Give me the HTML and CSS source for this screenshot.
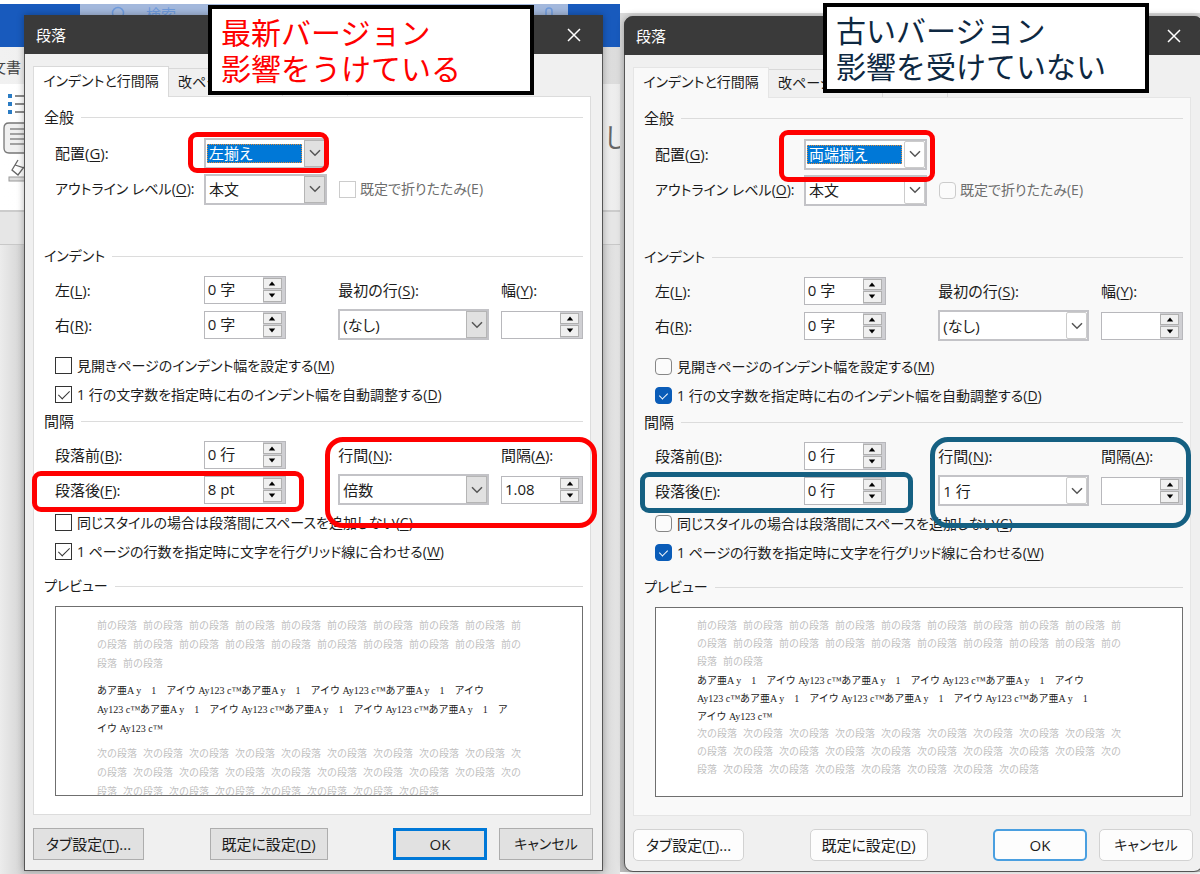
FILE: index.html
```html
<!DOCTYPE html>
<html lang="ja">
<head>
<meta charset="utf-8">
<meta name="viewport" content="width=device-width, initial-scale=1">
<title>段落</title>
<link rel="stylesheet" href="styles.css">
</head>
<body>
<svg class="defs" aria-hidden="true">
  <symbol id="chevron" viewBox="0 0 12 8"><path d="M1 1.2 6 6.2 11 1.2" fill="none" stroke="currentColor" stroke-width="1.5"/></symbol>
  <symbol id="up" viewBox="0 0 8 5"><path d="M4 0.4 7.2 4.4H0.8Z" fill="currentColor"/></symbol>
  <symbol id="down" viewBox="0 0 8 5"><path d="M4 4.6 7.2 0.6H0.8Z" fill="currentColor"/></symbol>
  <symbol id="cross" viewBox="0 0 14 14"><path d="M1 1 13 13M13 1 1 13" fill="none" stroke="currentColor" stroke-width="1.5"/></symbol>
</svg>
<main class="compare">

<section class="side side-new">
  <div class="word" aria-hidden="true">
    <div class="word-title"><div class="word-search">
      <svg class="lens" viewBox="0 0 16 16"><circle cx="8" cy="7" r="5.5" fill="none" stroke="#6f9bdc" stroke-width="1.5"/><path d="M4 11 0 15" stroke="#6f9bdc" stroke-width="1.5"/></svg>
      <span>検索</span>
      <svg class="mic" viewBox="0 0 10 14"><rect x="2" y="1" width="6" height="11" rx="3" fill="none" stroke="#6f9bdc" stroke-width="1.5"/></svg>
    </div></div>
    <div class="word-tabs"><span>文書</span></div>
    <div class="word-ribbon">
      <svg class="tools" viewBox="0 0 24 100">
        <g fill="#2b7cc4"><rect x="8" y="6" width="4" height="4"/><rect x="8" y="14" width="4" height="4"/><rect x="8" y="22" width="4" height="4"/></g>
        <path d="M15 8h9M15 16h9M15 24h9" stroke="#666" stroke-width="1.3"/>
        <path d="M24 35H9Q4 35 4 40V60Q4 65 9 65H24" fill="#f0f0f0" stroke="#777" stroke-width="1.3"/>
        <path d="M10 41h14M10 46h14M10 51h14M10 56h14" stroke="#555" stroke-width="1.2"/>
        <path d="M18 72 12 82 18 87 24 79M15 77 24 80" fill="none" stroke="#666" stroke-width="1.3"/>
        <rect x="9" y="89" width="18" height="4" fill="#ddd" stroke="#999"/>
      </svg>
      <span class="style-name">し</span>
    </div>
    <div class="word-ruler"></div>
    <div class="word-page"></div>
  </div>

  <form class="dialog" aria-label="段落 最新バージョン">
    <header class="titlebar"><h2>段落</h2><button type="button" class="close" aria-label="閉じる"><svg><use href="#cross"/></svg></button></header>
    <nav class="tabs"><button type="button" class="tab tab-on">インデントと行間隔</button><button type="button" class="tab tab-page">改ページと改行</button><button type="button" class="tab tab-style">体裁</button></nav>
    <div class="panel">
      <h3 class="group">全般</h3>
      <div class="general">
        <label for="a-align">配置(<u>G</u>):</label>
        <div class="combo combo-focus"><select id="a-align"><option>左揃え</option></select><span class="drop"><svg><use href="#chevron"/></svg></span></div>
        <span></span>
        <label class="kana" for="a-level">アウトライン レベル(<u>O</u>):</label>
        <div class="combo"><select id="a-level"><option>本文</option></select><span class="drop"><svg><use href="#chevron"/></svg></span></div>
        <label class="check check-off"><input type="checkbox" disabled>既定で折りたたみ(E)</label>
      </div>
      <h3 class="group group-indent kana">インデント</h3>
      <div class="fields">
        <label for="a-left">左(<u>L</u>):</label>
        <div class="spin"><input id="a-left" type="text" value="0 字"><span class="steps"><button type="button" aria-label="増やす"><svg><use href="#up"/></svg></button><button type="button" aria-label="減らす"><svg><use href="#down"/></svg></button></span></div>
        <label for="a-first">最初の行(<u>S</u>):</label>
        <label for="a-width">幅(<u>Y</u>):</label>
        <label for="a-right">右(<u>R</u>):</label>
        <div class="spin"><input id="a-right" type="text" value="0 字"><span class="steps"><button type="button" aria-label="増やす"><svg><use href="#up"/></svg></button><button type="button" aria-label="減らす"><svg><use href="#down"/></svg></button></span></div>
        <div class="combo combo-wide"><select id="a-first"><option>(なし)</option></select><span class="drop"><svg><use href="#chevron"/></svg></span></div>
        <div class="spin"><input id="a-width" type="text" value=""><span class="steps"><button type="button" aria-label="増やす"><svg><use href="#up"/></svg></button><button type="button" aria-label="減らす"><svg><use href="#down"/></svg></button></span></div>
      </div>
      <div class="checks checks-indent">
        <label class="check"><input type="checkbox"><span>見開きページのインデント幅を設定する(<u>M</u>)</span></label>
        <label class="check"><input type="checkbox" checked><span>1 行の文字数を指定時に右のインデント幅を自動調整する(<u>D</u>)</span></label>
      </div>
      <h3 class="group">間隔</h3>
      <div class="fields">
        <label for="a-before">段落前(<u>B</u>):</label>
        <div class="spin"><input id="a-before" type="text" value="0 行"><span class="steps"><button type="button" aria-label="増やす"><svg><use href="#up"/></svg></button><button type="button" aria-label="減らす"><svg><use href="#down"/></svg></button></span></div>
        <label for="a-line">行間(<u>N</u>):</label>
        <label for="a-at">間隔(<u>A</u>):</label>
        <label for="a-after">段落後(<u>F</u>):</label>
        <div class="spin"><input id="a-after" type="text" value="8 pt"><span class="steps"><button type="button" aria-label="増やす"><svg><use href="#up"/></svg></button><button type="button" aria-label="減らす"><svg><use href="#down"/></svg></button></span></div>
        <div class="combo combo-wide"><select id="a-line"><option>倍数</option></select><span class="drop"><svg><use href="#chevron"/></svg></span></div>
        <div class="spin"><input id="a-at" type="text" value="1.08"><span class="steps"><button type="button" aria-label="増やす"><svg><use href="#up"/></svg></button><button type="button" aria-label="減らす"><svg><use href="#down"/></svg></button></span></div>
      </div>
      <div class="checks">
        <label class="check"><input type="checkbox"><span>同じスタイルの場合は段落間にスペースを追加しない(<u>C</u>)</span></label>
        <label class="check"><input type="checkbox" checked><span>1 ページの行数を指定時に文字を行グリッド線に合わせる(<u>W</u>)</span></label>
      </div>
      <h3 class="group group-preview kana">プレビュー</h3>
      <div class="preview">
        <p>前の段落 前の段落 前の段落 前の段落 前の段落 前の段落 前の段落 前の段落 前の段落 前<br>の段落 前の段落 前の段落 前の段落 前の段落 前の段落 前の段落 前の段落 前の段落 前の<br>段落 前の段落</p>
        <p class="sample">あア亜A y　1　アイウ Ay123 c™あア亜A y　1　アイウ Ay123 c™あア亜A y　1　アイウ<br>Ay123 c™あア亜A y　1　アイウ Ay123 c™あア亜A y　1　アイウ Ay123 c™あア亜A y　1　ア<br>イウ Ay123 c™</p>
        <p>次の段落 次の段落 次の段落 次の段落 次の段落 次の段落 次の段落 次の段落 次の段落 次<br>の段落 次の段落 次の段落 次の段落 次の段落 次の段落 次の段落 次の段落 次の段落 次の<br>段落 次の段落 次の段落 次の段落 次の段落 次の段落 次の段落 次の段落</p>
      </div>
    </div>
    <footer class="actions">
      <button type="button" class="push push-tab">タブ設定(<u>T</u>)...</button>
      <button type="button" class="push push-default">既定に設定(<u>D</u>)</button>
      <div class="confirm"><button type="button" class="push push-ok">OK</button><button type="button" class="push kana">キャンセル</button></div>
    </footer>
    <div class="note note-new">最新バージョン<br>影響をうけている</div>
    <div class="mark mark-align"></div>
    <div class="mark mark-after"></div>
    <div class="mark mark-line"></div>
  </form>
</section>

<section class="side side-old">
  <div class="desk" aria-hidden="true"></div>
  <form class="dialog dialog-round" aria-label="段落 古いバージョン">
    <header class="titlebar"><h2>段落</h2><button type="button" class="close" aria-label="閉じる"><svg><use href="#cross"/></svg></button></header>
    <nav class="tabs"><button type="button" class="tab tab-on">インデントと行間隔</button><button type="button" class="tab tab-page">改ページと改行</button><button type="button" class="tab tab-style">体裁</button></nav>
    <div class="panel">
      <h3 class="group">全般</h3>
      <div class="general">
        <label for="b-align">配置(<u>G</u>):</label>
        <div class="combo combo-focus"><select id="b-align"><option>両端揃え</option></select><span class="drop"><svg><use href="#chevron"/></svg></span></div>
        <span></span>
        <label class="kana" for="b-level">アウトライン レベル(<u>O</u>):</label>
        <div class="combo"><select id="b-level"><option>本文</option></select><span class="drop"><svg><use href="#chevron"/></svg></span></div>
        <label class="check check-off"><input type="checkbox" disabled>既定で折りたたみ(E)</label>
      </div>
      <h3 class="group group-indent kana">インデント</h3>
      <div class="fields">
        <label for="b-left">左(<u>L</u>):</label>
        <div class="spin"><input id="b-left" type="text" value="0 字"><span class="steps"><button type="button" aria-label="増やす"><svg><use href="#up"/></svg></button><button type="button" aria-label="減らす"><svg><use href="#down"/></svg></button></span></div>
        <label for="b-first">最初の行(<u>S</u>):</label>
        <label for="b-width">幅(<u>Y</u>):</label>
        <label for="b-right">右(<u>R</u>):</label>
        <div class="spin"><input id="b-right" type="text" value="0 字"><span class="steps"><button type="button" aria-label="増やす"><svg><use href="#up"/></svg></button><button type="button" aria-label="減らす"><svg><use href="#down"/></svg></button></span></div>
        <div class="combo combo-wide"><select id="b-first"><option>(なし)</option></select><span class="drop"><svg><use href="#chevron"/></svg></span></div>
        <div class="spin"><input id="b-width" type="text" value=""><span class="steps"><button type="button" aria-label="増やす"><svg><use href="#up"/></svg></button><button type="button" aria-label="減らす"><svg><use href="#down"/></svg></button></span></div>
      </div>
      <div class="checks checks-indent">
        <label class="check"><input type="checkbox"><span>見開きページのインデント幅を設定する(<u>M</u>)</span></label>
        <label class="check"><input type="checkbox" checked><span>1 行の文字数を指定時に右のインデント幅を自動調整する(<u>D</u>)</span></label>
      </div>
      <h3 class="group">間隔</h3>
      <div class="fields">
        <label for="b-before">段落前(<u>B</u>):</label>
        <div class="spin"><input id="b-before" type="text" value="0 行"><span class="steps"><button type="button" aria-label="増やす"><svg><use href="#up"/></svg></button><button type="button" aria-label="減らす"><svg><use href="#down"/></svg></button></span></div>
        <label for="b-line">行間(<u>N</u>):</label>
        <label for="b-at">間隔(<u>A</u>):</label>
        <label for="b-after">段落後(<u>F</u>):</label>
        <div class="spin"><input id="b-after" type="text" value="0 行"><span class="steps"><button type="button" aria-label="増やす"><svg><use href="#up"/></svg></button><button type="button" aria-label="減らす"><svg><use href="#down"/></svg></button></span></div>
        <div class="combo combo-wide"><select id="b-line"><option>1 行</option></select><span class="drop"><svg><use href="#chevron"/></svg></span></div>
        <div class="spin"><input id="b-at" type="text" value=""><span class="steps"><button type="button" aria-label="増やす"><svg><use href="#up"/></svg></button><button type="button" aria-label="減らす"><svg><use href="#down"/></svg></button></span></div>
      </div>
      <div class="checks">
        <label class="check"><input type="checkbox"><span>同じスタイルの場合は段落間にスペースを追加しない(<u>C</u>)</span></label>
        <label class="check"><input type="checkbox" checked><span>1 ページの行数を指定時に文字を行グリッド線に合わせる(<u>W</u>)</span></label>
      </div>
      <h3 class="group group-preview kana">プレビュー</h3>
      <div class="preview preview-tight">
        <p>前の段落 前の段落 前の段落 前の段落 前の段落 前の段落 前の段落 前の段落 前の段落 前<br>の段落 前の段落 前の段落 前の段落 前の段落 前の段落 前の段落 前の段落 前の段落 前の<br>段落 前の段落</p>
        <p class="sample">あア亜A y　1　アイウ Ay123 c™あア亜A y　1　アイウ Ay123 c™あア亜A y　1　アイウ<br>Ay123 c™あア亜A y　1　アイウ Ay123 c™あア亜A y　1　アイウ Ay123 c™あア亜A y　1<br>アイウ Ay123 c™</p>
        <p>次の段落 次の段落 次の段落 次の段落 次の段落 次の段落 次の段落 次の段落 次の段落 次<br>の段落 次の段落 次の段落 次の段落 次の段落 次の段落 次の段落 次の段落 次の段落 次の<br>段落 次の段落 次の段落 次の段落 次の段落 次の段落 次の段落 次の段落</p>
      </div>
    </div>
    <footer class="actions">
      <button type="button" class="push push-tab">タブ設定(<u>T</u>)...</button>
      <button type="button" class="push push-default">既定に設定(<u>D</u>)</button>
      <div class="confirm"><button type="button" class="push push-ok">OK</button><button type="button" class="push kana">キャンセル</button></div>
    </footer>
    <div class="note note-old">古いバージョン<br>影響を受けていない</div>
    <div class="mark mark-align-old"></div>
    <div class="mark mark-blue mark-after-old"></div>
    <div class="mark mark-blue mark-line-old"></div>
  </form>
</section>

</main>
</body>
</html>
```
FILE: styles.css
```css
* { box-sizing: border-box; }

body {
  margin: 0;
  background: #fff;
  color: #1c1c1c;
  font: 15px/20px "Open Sans", "Noto Sans CJK JP", sans-serif;
  font-feature-settings: "palt";
}

h2, h3, p { margin: 0; font-size: inherit; font-weight: 400; }

button, input, select {
  margin: 0;
  padding: 0;
  border: 0;
  background: none;
  color: inherit;
  font: inherit;
  font-feature-settings: inherit;
}

label { white-space: nowrap; }
u { text-underline-offset: 2px; }

.kana, .tab, .check { font-size: 14px; }

.defs { position: absolute; width: 0; height: 0; }

.compare { display: grid; grid-template-columns: 620fr 580fr; overflow: hidden; }
.side { position: relative; min-width: 0; }
.side-new { padding: 15px 17px 2px 24px; }
.side-old { padding: 16px 0 2px 4px; }
.side-old .dialog { margin-right: -3px; }

/* Word window behind the left dialog */
.word { position: absolute; inset: 4px 0 0; display: flex; flex-direction: column; background: #e6e6e6; overflow: hidden; }
.word-title { height: 43px; padding: 0 52px 0 80px; background: #185abd; }
.word-search { display: flex; gap: 20px; height: 43px; padding: 0 14px 0 30px; background: #a3b8dc; color: #6f9bdc; }
.lens { width: 16px; height: 16px; margin-top: 2px; }
.mic { width: 10px; height: 14px; margin: 3px 0 0 auto; }
.word-tabs { height: 37px; padding-top: 10px; background: linear-gradient(90deg, #f1f1f1, #dcdcdc); color: #444; }
.word-tabs span { display: block; margin-left: -9px; }
.word-ribbon { display: flex; justify-content: space-between; height: 128px; border-bottom: 2px solid #ccc; background: linear-gradient(90deg, #fff, #fafafa 90%, #ececec); }
.tools { width: 24px; height: 100px; margin-top: 4px; }
.style-name { width: 15px; margin-top: 40px; font-size: 26px; line-height: 26px; color: #666; }
.word-ruler { height: 33px; border-bottom: 1px solid #c8c8c8; }
.word-page { flex: 1; background: linear-gradient(90deg, #ececec, #d2d2d2 4%, #d2d2d2 96%, #e6e6e6); }
.desk { position: absolute; inset: 13px 0 2px; background: linear-gradient(#dadada 0, #c9c9c9 70%, #bdbdbd); }

.dialog {
  position: relative;
  border: 1px solid #555;
  background: #f0f0f0;
  box-shadow: 0 0 7px rgba(0, 0, 0, .3);
}
.titlebar { display: flex; align-items: center; justify-content: space-between; height: 39px; margin: -1px -1px 0; padding: 0 22px 0 12px; background: #3a3a3a; color: #fff; }
.close { width: 14px; height: 20px; }
.close svg { display: block; width: 14px; height: 14px; }

.tabs { display: flex; align-items: flex-end; height: 42px; padding: 0 8px; }
.tab { height: 28px; padding: 0 9px 2px; border: 1px solid #d9d9d9; border-bottom: 0; border-left: 0; white-space: nowrap; }
.tab-on { z-index: 1; width: 136px; height: 31px; margin-bottom: -1px; padding: 0 0 2px; border-left: 1px solid #dcdcdc; background: #fff; }
.tab-page { width: 114px; }
.tab-style { width: 65px; }

.panel { margin: 0 11px 0 8px; padding: 8px 7px 18px 10px; border: 1px solid #dcdcdc; background: #fff; }

.group { display: flex; align-items: center; gap: 7px; height: 24px; white-space: nowrap; }
.group::after { content: ""; flex: 1; height: 1px; background: #dcdcdc; }
.group-indent { margin-top: 37px; }
.group-preview { margin-top: 8px; }

.general { display: grid; grid-template-columns: 149px 135px 1fr; grid-auto-rows: 36px; align-items: center; margin-top: 6px; padding-left: 11px; }
.fields { display: grid; grid-template-columns: 149fr 135fr 163fr 81fr; grid-auto-rows: 35px; align-items: center; margin-top: 4px; padding-left: 11px; }

.combo { display: flex; width: 123px; height: 31px; border: 2px solid #c3c3c7; background: #fff; }
.combo-wide { width: 151px; }
.combo select { flex: 1; min-width: 0; padding-left: 3px; appearance: none; outline: 0; }
.combo-focus select { margin: 4px 2px 4px 1px; padding-left: 2px; outline: 1px dotted #e08a3a; outline-offset: -1px; background: #0078d7; color: #fff; line-height: 19px; }
.drop { display: grid; place-items: center; width: 21px; border: 1px solid #b5b5b5; background: #e1e1e1; color: #555; }
.drop svg { width: 12px; height: 8px; }

.spin { display: flex; width: 82px; height: 28px; border: 1px solid #b8b8bc; background: #fff; }
.spin input { flex: 1; min-width: 0; padding: 0 0 2px 3px; outline: 0; }
.steps { display: flex; flex-direction: column; gap: 1px; width: 22px; padding: 1px 3px 1px 0; background: #cfcfd3; }
.steps button { display: grid; place-items: center; flex: 1; min-height: 0; border: 1px solid #b0b0b0; background: #f0f0f0; color: #000; }
.steps svg { width: 8px; height: 5px; }

.checks { margin-top: 1px; padding-left: 11px; }
.checks-indent { margin-top: 9px; }
.check { display: flex; align-items: center; gap: 5px; height: 29px; }
.check input { position: relative; flex: none; width: 17px; height: 17px; border: 1px solid #333; background: #fff; appearance: none; }
.check input:checked::before { content: ""; position: absolute; left: 5px; top: 1px; width: 5px; height: 10px; border: solid #333; border-width: 0 1px 1px 0; transform: rotate(45deg); }
.check-off { gap: 4px; color: #6d6d6d; }
.check-off input { border-color: #ccc; }

.preview { height: 190px; margin: 8px 0 0 11px; padding: 10px 0 0 41px; border: 1px solid #6f6f6f; background: #fff; color: #bfbfbf; overflow: hidden; font: 10px/19px "Liberation Mono", "Noto Sans CJK JP", monospace; font-feature-settings: normal; white-space: nowrap; }
.preview p + p { margin-top: 7px; }
.preview .sample { color: #222; font-family: "Liberation Serif", "Noto Sans CJK JP", serif; }
.preview-tight { line-height: 18px; }
.preview-tight p + p { margin-top: 0; }

.actions { display: flex; justify-content: space-between; padding: 13px 9px 10px 8px; }
.confirm { display: flex; gap: 12px; }
.push { width: 94px; height: 32px; border: 1px solid #adadad; background: #e1e1e1; }
.push-tab { width: 111px; }
.push-default { width: 118px; }
.push-ok { border: 3px solid #0078d7; }

/* Rounded dialog of the older build */
.dialog-round { border-radius: 9px; }
.dialog-round .titlebar { border-radius: 9px 9px 0 0; }
.dialog-round .panel, .dialog-round .tab-on { border-color: #e5e5e5; background: #f9f9f9; }
.dialog-round .drop { border-radius: 2px; border-color: #ccc; background: #fff; }
.dialog-round .check input { border-color: #868686; border-radius: 4px; background: #fbfbfb; }
.dialog-round .check input:checked { border-color: #0a5cb8; background: #0a5cb8; }
.dialog-round .check input:checked::before { left: 5px; top: 3px; width: 4px; height: 7px; border-color: #fff; }
.dialog-round .check-off input { border-color: #ccc; }
.dialog-round .push { border-color: #d2d2d2; border-radius: 5px; background: #fdfdfd; }
.dialog-round .push-ok { border: 2px solid #4a9fe0; }

/* Callouts and outlines laid over the dialogs */
.note { position: absolute; z-index: 2; width: 326px; height: 90px; padding: 6px 9px; border: 4px solid #000; background: #fff; font-size: 30px; line-height: 36px; white-space: nowrap; font-feature-settings: normal; }
.note-new { left: 183px; top: -11px; color: #f00; }
.note-old { left: 198px; top: -14px; color: #0e2841; }
.mark { position: absolute; z-index: 1; border: 5px solid #f00; border-radius: 9px; pointer-events: none; }
.mark-blue { border-color: #156082; }
.mark-align { left: 163px; top: 116px; width: 141px; height: 41px; }
.mark-after { left: 7px; top: 455px; width: 272px; height: 41px; }
.mark-line { right: 5px; top: 421px; width: 272px; height: 91px; border-radius: 18px; }
.mark-align-old { left: 154px; top: 113px; width: 156px; height: 52px; }
.mark-after-old { left: 15px; top: 455px; width: 273px; height: 41px; }
.mark-line-old { right: 11px; top: 420px; width: 261px; height: 91px; border-radius: 18px; }
```
